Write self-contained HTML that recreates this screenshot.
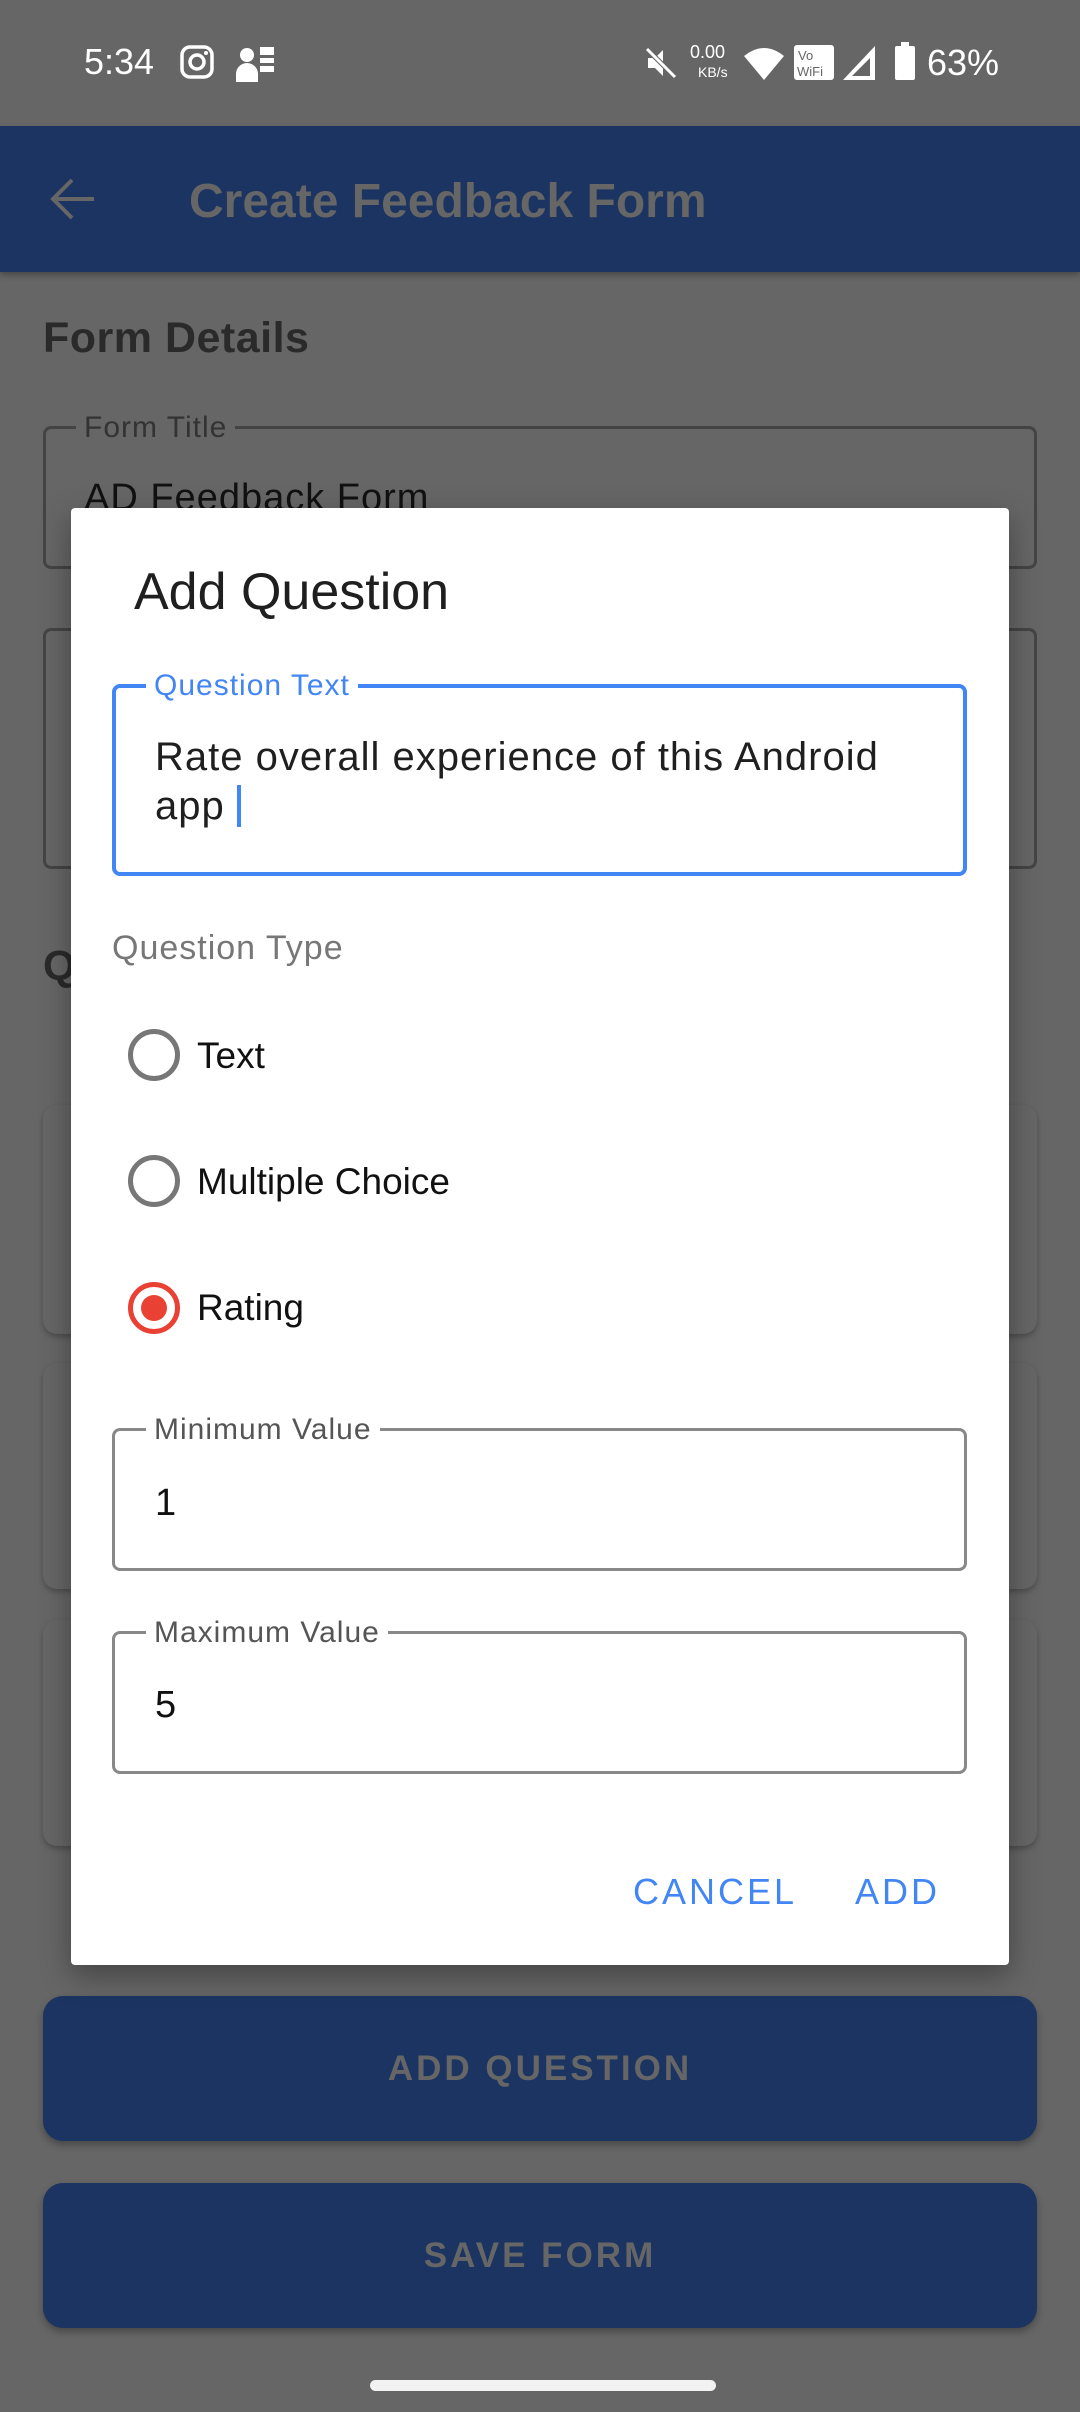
<!DOCTYPE html>
<html><head><meta charset="utf-8"><style>
*{margin:0;padding:0;box-sizing:border-box}
body{width:1080px;height:2412px;background:#666;position:relative;overflow:hidden;font-family:"Liberation Sans",sans-serif}
.a{position:absolute;white-space:nowrap}
.c{display:flex;align-items:center}
.box{position:absolute;border-radius:8px}
.lbl{position:absolute;padding:0 8px;font-size:30px;line-height:32px;letter-spacing:1px}
.radio{position:absolute;width:52px;height:52px;border-radius:50%;border:5px solid #777}
.card{position:absolute;left:43px;width:994px;border-radius:14px;background:#666;box-shadow:0 3px 6px rgba(0,0,0,.25)}
.btn{position:absolute;left:43px;width:994px;height:145px;border-radius:20px;background:#1b3461;color:#666;font-size:35px;font-weight:bold;letter-spacing:3px;display:flex;align-items:center;justify-content:center;box-shadow:0 4px 8px rgba(0,0,0,.3)}
</style></head><body>
<!-- status bar -->
<div class="a c" style="left:84px;top:40px;height:44px;color:#fff;font-size:36px">5:34</div>
<svg class="a" style="left:180px;top:45px" width="34" height="34" viewBox="0 0 34 34"><rect x="2" y="2" width="30" height="30" rx="8" fill="none" stroke="#fff" stroke-width="3.5"/><circle cx="17" cy="17" r="7" fill="none" stroke="#fff" stroke-width="3.5"/><circle cx="26" cy="8" r="2" fill="#fff"/></svg>
<svg class="a" style="left:234px;top:44px" width="40" height="38" viewBox="0 0 40 38"><circle cx="13" cy="11" r="7" fill="#fff"/><path d="M2 38v-8a10 10 0 0 1 22 0v8z" fill="#fff"/><rect x="26" y="3" width="14" height="8" fill="#fff"/><rect x="26" y="14" width="14" height="5" fill="#fff"/><rect x="26" y="22" width="14" height="6" fill="#fff"/></svg>
<svg class="a" style="left:644px;top:46px" width="34" height="34" viewBox="0 0 34 34"><path d="M4 12h7l8-8v26l-8-8H4z" fill="#fff"/><line x1="3" y1="3" x2="31" y2="31" stroke="#666" stroke-width="5"/><line x1="3" y1="3" x2="31" y2="31" stroke="#fff" stroke-width="3"/></svg>
<div class="a" style="left:690px;top:42px;color:#fff;font-size:18px;line-height:20px">0.00</div>
<div class="a" style="left:698px;top:64px;color:#fff;font-size:14px">KB/s</div>
<svg class="a" style="left:744px;top:48px" width="40" height="32" viewBox="0 0 40 32"><path d="M0 8Q20-8 40 8L20 32z" fill="#fff"/></svg>
<svg class="a" style="left:794px;top:45px" width="40" height="35" viewBox="0 0 40 35"><rect width="40" height="35" rx="3" fill="#fff"/><text x="4" y="15" font-size="13" fill="#666" font-family="Liberation Sans">Vo</text><text x="3" y="31" font-size="13" fill="#666" font-family="Liberation Sans">WiFi</text></svg>
<svg class="a" style="left:843px;top:46px" width="32" height="34" viewBox="0 0 32 34"><path d="M32 0V34H0z" fill="#fff"/><path d="M27 12V30H9z" fill="#666"/></svg>
<svg class="a" style="left:895px;top:42px" width="20" height="38" viewBox="0 0 20 38"><rect x="6" y="0" width="8" height="4" fill="#fff"/><rect x="0" y="4" width="20" height="34" rx="2" fill="#fff"/></svg>
<div class="a c" style="left:927px;top:40px;height:46px;color:#fff;font-size:36px">63%</div>
<!-- app bar -->
<div class="a" style="left:0;top:126px;width:1080px;height:146px;background:#1b3461;box-shadow:0 3px 6px rgba(0,0,0,.3)"></div>
<svg class="a" style="left:50px;top:176px" width="46" height="46" viewBox="0 0 46 46"><path d="M44 23H4M22 4L3 23l19 19" fill="none" stroke="#666" stroke-width="4"/></svg>
<div class="a c" style="left:189px;top:170px;height:62px;color:#666;font-size:48px;font-weight:bold">Create Feedback Form</div>
<!-- background content -->
<div class="a c" style="left:43px;top:312px;height:52px;color:#2a2a2a;font-size:43px;font-weight:bold;letter-spacing:0.5px">Form Details</div>
<div class="box" style="left:43px;top:426px;width:994px;height:143px;border:3px solid #444"></div>
<div class="lbl" style="left:76px;top:412px;background:#666;color:#333">Form Title</div>
<div class="a c" style="left:84px;top:475px;height:46px;color:#111;font-size:38px;letter-spacing:1px">AD Feedback Form</div>
<div class="box" style="left:43px;top:628px;width:994px;height:241px;border:3px solid #444"></div>
<div class="a c" style="left:43px;top:940px;height:52px;color:#2a2a2a;font-size:42px;font-weight:bold">Q</div>
<div class="card" style="top:1105px;height:229px"></div>
<div class="card" style="top:1363px;height:226px"></div>
<div class="card" style="top:1620px;height:226px"></div>
<div class="btn" style="top:1996px">ADD QUESTION</div>
<div class="btn" style="top:2183px">SAVE FORM</div>
<div class="a" style="left:370px;top:2380px;width:346px;height:11px;border-radius:6px;background:#f2f2f2"></div>
<!-- dialog -->
<div class="a" style="left:71px;top:508px;width:938px;height:1457px;background:#fff;border-radius:4px;box-shadow:0 10px 30px rgba(0,0,0,.35)"></div>
<div class="a c" style="left:134px;top:562px;height:60px;color:#1f1f1f;font-size:52px">Add Question</div>
<div class="box" style="left:112px;top:684px;width:855px;height:192px;border:4px solid #4285f4"></div>
<div class="lbl" style="left:146px;top:670px;background:#fff;color:#4285f4">Question Text</div>
<div class="a" style="left:155px;top:733px;color:#1f1f1f;font-size:40px;line-height:49px;letter-spacing:1px">Rate overall experience of this Android<br>app <span style="display:inline-block;width:4px;height:42px;background:#4285f4;vertical-align:-8px"></span></div>
<div class="a c" style="left:112px;top:928px;height:40px;color:#777;font-size:34px;letter-spacing:1px">Question Type</div>
<div class="radio" style="left:128px;top:1029px"></div>
<div class="a c" style="left:197px;top:1034px;height:44px;color:#111;font-size:37px">Text</div>
<div class="radio" style="left:128px;top:1155px"></div>
<div class="a c" style="left:197px;top:1160px;height:44px;color:#111;font-size:37px">Multiple Choice</div>
<div class="radio" style="left:128px;top:1282px;border-color:#e94235"><div style="position:absolute;left:8px;top:8px;width:26px;height:26px;border-radius:50%;background:#e94235"></div></div>
<div class="a c" style="left:197px;top:1286px;height:44px;color:#111;font-size:37px">Rating</div>
<div class="box" style="left:112px;top:1428px;width:855px;height:143px;border:3px solid #888"></div>
<div class="lbl" style="left:146px;top:1414px;background:#fff;color:#555">Minimum Value</div>
<div class="a c" style="left:155px;top:1480px;height:46px;color:#111;font-size:38px">1</div>
<div class="box" style="left:112px;top:1631px;width:855px;height:143px;border:3px solid #888"></div>
<div class="lbl" style="left:146px;top:1617px;background:#fff;color:#555">Maximum Value</div>
<div class="a c" style="left:155px;top:1682px;height:46px;color:#111;font-size:38px">5</div>
<div class="a c" style="left:633px;top:1870px;height:44px;color:#4285f4;font-size:36px;letter-spacing:3px">CANCEL</div>
<div class="a c" style="left:855px;top:1870px;height:44px;color:#4285f4;font-size:36px;letter-spacing:3px">ADD</div>
</body></html>
